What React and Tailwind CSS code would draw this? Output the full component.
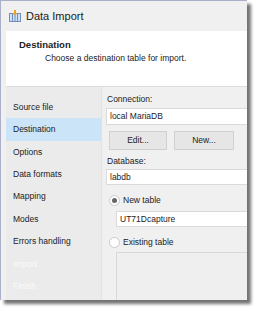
import React from 'react';

const NAV = [
  { label: 'Source file' },
  { label: 'Destination', active: true },
  { label: 'Options' },
  { label: 'Data formats' },
  { label: 'Mapping' },
  { label: 'Modes' },
  { label: 'Errors handling' },
  { label: 'Import', disabled: true },
  { label: 'Finish', disabled: true },
];

function ImportIcon() {
  return (
    <svg width="12" height="12" viewBox="0 0 12 12">
      <rect x="0.5" y="3.5" width="11" height="8" fill="#cfe0f5" stroke="#6f8fbf" />
      <line x1="3.5" y1="4" x2="3.5" y2="11" stroke="#6f8fbf" />
      <line x1="6" y1="4" x2="6" y2="11" stroke="#6f8fbf" />
      <line x1="8.5" y1="4" x2="8.5" y2="11" stroke="#6f8fbf" />
      <path d="M5 0 H7 V3 H8.5 L6 5.5 L3.5 3 H5 Z" fill="#f0a020" />
    </svg>
  );
}

function Radio({ checked, label }) {
  return (
    <div className="flex items-center gap-[3px] h-[14px] pl-[3px]">
      <span className="w-[11px] h-[11px] rounded-full border border-[#c9c9c9] bg-white flex items-center justify-center">
        {checked && <span className="w-[5px] h-[5px] rounded-full bg-[#666]" />}
      </span>
      <span>{label}</span>
    </div>
  );
}

export default function App() {
  return (
    <div className="w-[259px] h-[313px] bg-white overflow-hidden text-[8.5px] text-[#222] font-['Liberation_Sans',Arial,sans-serif]">
      <div className="w-[247px] h-[300px] bg-[#f0f0f0] border-l border-t border-[#a9b0c8] shadow-[4px_4px_3px_rgba(0,0,0,0.55)] flex flex-col overflow-hidden">
        {/* title bar */}
        <div className="h-[30px] flex items-center gap-[5px] pl-[8px] shrink-0">
          <ImportIcon />
          <span className="text-[11px] text-[#1a1a1a]">Data Import</span>
        </div>

        <div className="flex-1 flex flex-col ml-[5px] min-h-0">
          {/* header */}
          <div className="h-[56px] bg-white border-b border-[#dcdcdc] pl-[13px] pt-[8px] shrink-0">
            <div className="text-[9.5px] font-bold leading-[12px]">Destination</div>
            <div className="pl-[26px] leading-[12px] mt-[1px]">Choose a destination table for import.</div>
          </div>

          <div className="flex-1 flex min-h-0">
            {/* nav */}
            <div className="w-[96px] bg-[#ebebeb] border-r border-[#e2e2e2] pt-[9px] shrink-0">
              {NAV.map(item => (
                <div
                  key={item.label}
                  className={`h-[22.4px] flex items-center pl-[7px] ${
                    item.active ? 'bg-[#cce4f7]' : ''
                  } ${item.disabled ? 'text-[#fbfbfb]' : 'text-[#222]'}`}
                >
                  {item.label}
                </div>
              ))}
            </div>

            {/* form */}
            <div className="flex-1 pl-[4px] pt-[6px] flex flex-col">
              <div className="pl-[1px] leading-[12px]">Connection:</div>
              <div className="mt-[3px] h-[17px] bg-white border border-[#dadada] border-r-0 pl-[3px] flex items-center">local MariaDB</div>
              <div className="mt-[6px] flex gap-[7px] pl-[3px]">
                <div className="w-[58px] h-[19px] bg-[#e6e6e6] border border-[#d0d0d0] flex items-center justify-center">Edit...</div>
                <div className="w-[60px] h-[19px] bg-[#e6e6e6] border border-[#d0d0d0] flex items-center justify-center">New...</div>
              </div>
              <div className="mt-[5px] pl-[1px] leading-[12px]">Database:</div>
              <div className="mt-[2px] h-[16px] bg-white border border-[#dadada] border-r-0 pl-[3px] flex items-center">labdb</div>
              <div className="mt-[8px]">
                <Radio checked label="New table" />
              </div>
              <div className="mt-[4px] ml-[10px] h-[16px] bg-white border border-[#dadada] border-r-0 pl-[3px] flex items-center">UT71Dcapture</div>
              <div className="mt-[8px]">
                <Radio label="Existing table" />
              </div>
              <div className="mt-[3px] ml-[10px] flex-1 bg-[#efefef] border border-[#d8d8d8] border-r-0 border-b-0" />
            </div>
          </div>
        </div>
      </div>
    </div>
  );
}
